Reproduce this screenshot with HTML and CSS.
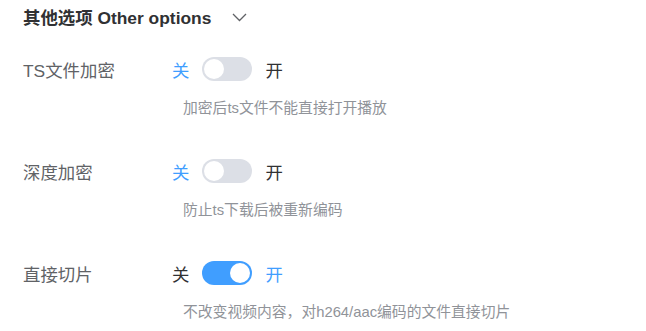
FILE: index.html
```html
<!DOCTYPE html>
<html lang="zh">
<head>
<meta charset="utf-8">
<link rel="stylesheet" href="styles.css">
</head>
<body>
<div class="panel">
  <div class="header">
    <span class="title">其他选项 Other options</span>
    <svg class="chevron" width="15" height="9" viewBox="0 0 15 9"><path d="M1 1 L7.5 7.5 L14 1" fill="none" stroke="#606266" stroke-width="1.3"/></svg>
  </div>

  <div class="item">
    <div class="main">
      <span class="label">TS文件加密</span>
      <span class="opt active">关</span>
      <span class="switch"><span class="thumb"></span></span>
      <span class="opt">开</span>
    </div>
    <div class="desc">加密后ts文件不能直接打开播放</div>
  </div>

  <div class="item">
    <div class="main">
      <span class="label">深度加密</span>
      <span class="opt active">关</span>
      <span class="switch"><span class="thumb"></span></span>
      <span class="opt">开</span>
    </div>
    <div class="desc">防止ts下载后被重新编码</div>
  </div>

  <div class="item">
    <div class="main">
      <span class="label">直接切片</span>
      <span class="opt">关</span>
      <span class="switch on"><span class="thumb"></span></span>
      <span class="opt active">开</span>
    </div>
    <div class="desc">不改变视频内容，对h264/aac编码的文件直接切片</div>
  </div>
</div>
</body>
</html>
```

FILE: styles.css
```css
html, body {
  margin: 0;
  padding: 0;
  background: #ffffff;
}
body {
  font-family: "Liberation Sans", "Noto Sans CJK SC", sans-serif;
}
.panel {
  padding-left: 23px;
}
.header {
  height: 33px;
  display: flex;
  align-items: center;
}
.title {
  font-size: 17.4px;
  font-weight: bold;
  color: #303133;
}
.chevron {
  margin-left: 21px;
  margin-top: 1px;
}
.item {
  margin-top: 24px;
}
.item + .item {
  margin-top: 41px;
}
.main {
  display: flex;
  align-items: center;
  height: 24px;
}
.label {
  width: 149px;
  font-size: 17.4px;
  color: #606266;
}
.opt {
  font-size: 17.4px;
  color: #303133;
}
.opt.active {
  color: #409eff;
}
.switch {
  width: 50px;
  height: 24px;
  border-radius: 12px;
  background: #dcdfe6;
  margin: 0 13px 0 13px;
  box-sizing: border-box;
  padding: 2px;
  display: flex;
}
.thumb {
  width: 20px;
  height: 20px;
  border-radius: 50%;
  background: #ffffff;
}
.switch.on {
  background: #409eff;
  justify-content: flex-end;
}
.desc {
  margin-top: 17px;
  padding-left: 160px;
  font-size: 14.8px;
  line-height: 20px;
  color: #909399;
}
```
